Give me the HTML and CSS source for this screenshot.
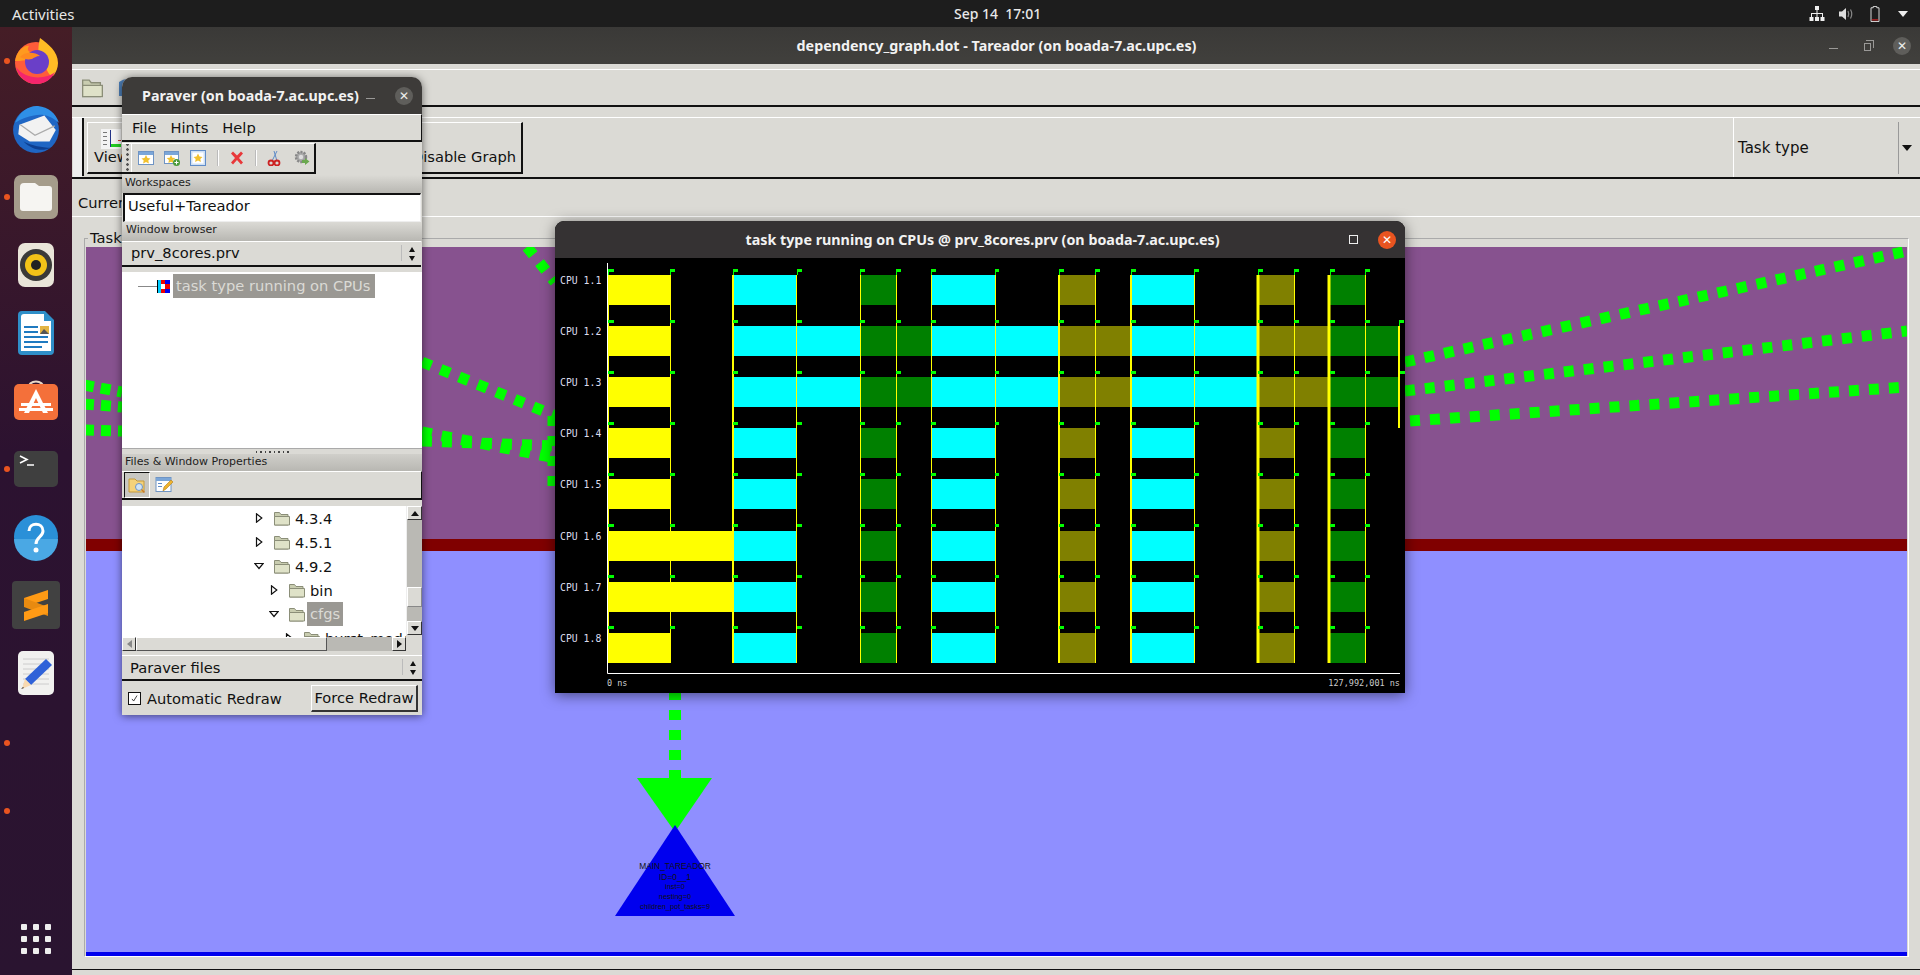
FILE: index.html
```html
<!DOCTYPE html>
<html lang="en">
<head>
<meta charset="utf-8">
<title>Tareador and Paraver</title>
<link rel="stylesheet" href="styles.css">
</head>
<body>
<svg class="defs" aria-hidden="true">
  <symbol id="folder" viewBox="0 0 16 15">
    <path d="M.5 14V1.500h5l1.500 2h7V14z" fill="#c9cdb0" stroke="#8b8e78"/>
    <path d="M.5 14V5.500h15V14z" fill="#dfe2c8" stroke="#8b8e78"/>
  </symbol>
  <symbol id="tri-right" viewBox="0 0 8 10"><path d="M1.500.8v8.400L6.800 5z" fill="#fff" stroke="#111" stroke-width="1.200"/></symbol>
  <symbol id="tri-down" viewBox="0 0 10 8"><path d="M.8 1.500h8.400L5 6.500z" fill="#fff" stroke="#111" stroke-width="1.200"/></symbol>
  <g id="flags">
    <path d="M608 0h6v3h-6zM670 0h5v3h-5zM733 0h5v3h-5zM797 0h5v3h-5zM860 0h5v3h-5zM896 0h5v3h-5zM931 0h5v3h-5zM995 0h4v3h-4zM1059 0h5v3h-5zM1095 0h5v3h-5zM1131 0h5v3h-5zM1194 0h5v3h-5zM1258 0h5v3h-5zM1294 0h5v3h-5zM1330 0h5v3h-5zM1365 0h5v3h-5z" fill="#0f0"/>
  </g>
  <g id="row-short">
    <rect x="608" width="63" height="30" fill="#ff0"/>
    <rect x="733" width="64" height="30" fill="#0ff"/>
    <rect x="860" width="37" height="30" fill="#008000"/>
    <rect x="931" width="64" height="30" fill="#0ff"/>
    <rect x="1059" width="36" height="30" fill="#808000"/>
    <rect x="1131" width="64" height="30" fill="#0ff"/>
    <rect x="1258" width="36" height="30" fill="#808000"/>
    <rect x="1329" width="36" height="30" fill="#008000"/>
  </g>
  <g id="row-long">
    <rect x="608" width="63" height="30" fill="#ff0"/>
    <rect x="733" width="127" height="30" fill="#0ff"/>
    <rect x="860" width="71" height="30" fill="#008000"/>
    <rect x="931" width="128" height="30" fill="#0ff"/>
    <rect x="1059" width="72" height="30" fill="#808000"/>
    <rect x="1131" width="127" height="30" fill="#0ff"/>
    <rect x="1258" width="71" height="30" fill="#808000"/>
    <rect x="1329" width="70" height="30" fill="#008000"/>
  </g>
</svg>

<header class="topbar">
  <span class="activities">Activities</span>
  <span class="clock">Sep 14&nbsp;&nbsp;17:01</span>
  <div class="tray">
    <svg class="tray-icon" viewBox="0 0 16 16"><path d="M6 0h4v4H8.500v3H14v4h1.500v4h-4v-4H13V8H8.500v3H10v4H6v-4h1.500V8H3v3h1.500v4h-4v-4H2V7h5.500V4H6z" fill="#eee"/></svg>
    <svg class="tray-icon" viewBox="0 0 16 16"><path d="M1 5.500h3L8 2v12l-4-3.500H1z" fill="#ddd"/><path d="M10 5q1.500 3 0 6M12.500 3.500q2.500 4.500 0 9" fill="none" stroke="#888" stroke-width="1.200"/></svg>
    <svg class="tray-icon" viewBox="0 0 16 18"><path d="M6 .5h4v1.500h2.500v15.500h-9V2H6z" fill="#1d1d1d" stroke="#eee"/><path d="M4.500 15h7v1.200h-7z" fill="#d22"/></svg>
    <span class="tray-arrow"></span>
  </div>
</header>

<div class="desktop">
  <nav class="dock">
    <div class="dock-item"><span class="dot"></span>
      <svg class="dock-icon" viewBox="0 0 48 48">
        <circle cx="24" cy="26" r="21" fill="#ff5c3a"/>
        <path d="M3 24C5 12 14 8 17 9c-2 3-1 5 1 6 6-1 10 3 10 6L8 24z" fill="#ff9a1f"/>
        <path d="M28 1c8 6 18 13 18 25 0 5-2 9-4 12-6 5-9-14-14-20-3-3-1-12 0-17z" fill="#ffbc25"/>
        <path d="M4 30c2 10 11 17 20 17s16-5 19-12c-8 7-29 9-39-5z" fill="#f4256d"/>
        <circle cx="25" cy="25" r="12" fill="#6a3fc8"/>
        <path d="M8 20c4-5 14-6 20-1-4 0-6 2-8 3-4 1-8 0-12-2z" fill="#ff8a1f"/>
      </svg>
    </div>
    <div class="dock-item">
      <svg class="dock-icon dock-wide" viewBox="0 0 48 48">
        <circle cx="24" cy="25" r="22" fill="#1f66c4"/>
        <path d="M4 18C8 7 18 1 26 2c10 1 17 7 20 16-8-7-16-9-24-7-6 1-12 3-18 7z" fill="#2f8fe6"/>
        <path d="M8 20l24-9 11 14-6 11H18L7 29z" fill="#f2f2f2"/>
        <path d="M9 20l14 10 19-9" fill="none" stroke="#aaa" stroke-width="1.200"/>
        <path d="M12 36c8 8 18 10 26 6-8 0-18-2-26-6z" fill="#0d3f91"/>
      </svg>
    </div>
    <div class="dock-item"><span class="dot"></span>
      <svg class="dock-icon" viewBox="0 0 48 48">
        <rect x="2" y="2" width="44" height="44" rx="7" fill="#a59c8b"/>
        <path d="M8 14a4 4 0 0 1 4-4h11l4 3h10a3 3 0 0 1 3 3v19a3 3 0 0 1-3 3H11a3 3 0 0 1-3-3z" fill="#f6f5f2"/>
      </svg>
    </div>
    <div class="dock-item">
      <svg class="dock-icon" viewBox="0 0 48 48">
        <rect x="6" y="2" width="36" height="44" rx="7" fill="#e9e5d9"/>
        <circle cx="24" cy="24" r="16" fill="#3a3a38"/>
        <circle cx="24" cy="24" r="11" fill="#f2c318"/>
        <circle cx="24" cy="24" r="5" fill="#222"/>
      </svg>
    </div>
    <div class="dock-item">
      <svg class="dock-icon" viewBox="0 0 48 48">
        <path d="M6 6a4 4 0 0 1 4-4h23l9 9v31a4 4 0 0 1-4 4H10a4 4 0 0 1-4-4z" fill="#2f8fc9"/>
        <path d="M9 8a3 3 0 0 1 3-3h20v7h7v30H9z" fill="#fff"/>
        <path d="M12 17h14v2H12zM12 22h14v2H12zM12 27h24v2H12zM12 32h24v2H12zM12 37h18v2H12z" fill="#1f7ac0"/>
        <path d="M28 17h9v8h-9z" fill="#e3b544"/><path d="M28 25l4-5 5 5z" fill="#555"/>
      </svg>
    </div>
    <div class="dock-item">
      <svg class="dock-icon" viewBox="0 0 48 48">
        <path d="M16 12c0-10 16-10 16 0" fill="none" stroke="#e8d8c8" stroke-width="2"/>
        <rect x="2" y="7" width="44" height="36" rx="5" fill="#f4703a"/>
        <path d="M24 12l12 24h-5l-7-15-7 15h-5z" fill="#fff"/>
        <path d="M9 26h30v3H9zM7 31h34v3H7z" fill="#fff"/>
      </svg>
    </div>
    <div class="dock-item"><span class="dot"></span>
      <svg class="dock-icon" viewBox="0 0 48 48">
        <rect x="2" y="6" width="44" height="36" rx="5" fill="#3f3f3f"/>
        <path d="M8 11l7 3.500-7 3.500M15 20h7" fill="none" stroke="#fff" stroke-width="1.600"/>
      </svg>
    </div>
    <div class="dock-item">
      <svg class="dock-icon" viewBox="0 0 48 48">
        <circle cx="24" cy="24" r="22" fill="#2a90d8"/>
        <path d="M2 26h44a22 22 0 0 1-44 0z" fill="#4aa8e4"/>
        <path d="M17 18c0-9 14-9 14 0 0 6-7 6-7 13" fill="none" stroke="#fff" stroke-width="3"/>
        <circle cx="24" cy="37" r="2.500" fill="#fff"/>
      </svg>
    </div>
    <div class="dock-item">
      <svg class="dock-icon" viewBox="0 0 48 48">
        <rect width="48" height="48" rx="4" x="0" y="0" fill="#414141"/>
        <path d="M12 17L36 9v9L12 26z" fill="#ff9a15"/>
        <path d="M12 17l24 9v9L12 26z" fill="#e88a10"/>
        <path d="M12 31l24-8v9l-24 8z" fill="#ff9a15"/>
      </svg>
    </div>
    <div class="dock-item">
      <svg class="dock-icon" viewBox="0 0 48 48">
        <rect x="6" y="2" width="36" height="44" rx="5" fill="#f1f1ef"/>
        <path d="M11 10h26M11 15h26M11 20h26M11 25h26M11 30h26M11 35h26" stroke="#ccc" stroke-width="1"/>
        <path d="M34 10l6 6-21 20-6-6z" fill="#2f62d8"/>
        <path d="M13 30l6 6-9 4z" fill="#f8d9b0"/>
        <path d="M11 38l-2 2 3-1z" fill="#333"/>
      </svg>
    </div>
    <span class="dot dot-a"></span>
    <span class="dot dot-b"></span>
    <div class="app-grid">
      <i></i><i></i><i></i><i></i><i></i><i></i><i></i><i></i><i></i>
    </div>
  </nav>

  <main class="main-window">
    <div class="wm-title main-title">
      <span class="wm-text">dependency_graph.dot - Tareador (on boada-7.ac.upc.es)</span>
      <div class="wm-buttons">
        <span class="wm-min"></span>
        <span class="wm-max"></span>
        <span class="wm-close">✕</span>
      </div>
    </div>
    <div class="toolbar-one">
      <svg class="tb-folder" viewBox="0 0 16 15"><use href="#folder"/></svg>
      <svg class="tb-save" viewBox="0 0 20 20"><path d="M2 4q8-6 16 0v14H2z" fill="#4d7fb8"/></svg>
    </div>
    <div class="toolbar-two">
      <div class="grip-big"></div>
      <div class="group">
        <div class="view-btn">
          <svg class="view-icon" viewBox="0 0 20 20"><rect width="20" height="20" fill="#f3f3f3"/><path d="M2 3h4v1H2zM2 7h4v1H2zM2 11h4v1H2zM2 15h4v1H2z" fill="#777"/><path d="M9 1h1v17H9z" fill="#238"/><path d="M10 15h10v3H10z" fill="#2c2"/><path d="M17 11h3v1h-3z" fill="#c33"/></svg>
          <span>View</span>
        </div>
        <span class="disable">Disable Graph</span>
      </div>
      <div class="task-combo">
        <span class="task-text">Task type</span>
        <span class="task-sep"></span>
        <span class="task-arrow"></span>
      </div>
    </div>
    <div class="current-row"><span>Current</span></div>
    <div class="notebook">
      <div class="frame">
        <span class="frame-legend">Task</span>
        <svg class="graph" viewBox="86 247 1821 709">
          <rect x="86" y="247" width="1821" height="292" fill="#87528f"/>
          <rect x="86" y="539" width="1821" height="12" fill="#800000"/>
          <rect x="86" y="551" width="1821" height="401" fill="#8f8fff"/>
          <rect x="86" y="952" width="1821" height="4" fill="#0000ee"/>
          <g class="edges">
            <path d="M527 247L555 282"/>
            <path d="M422 362L556 416"/>
            <path d="M422 432L556 458"/>
            <path d="M422 441L556 446"/>
            <path class="edge-s" d="M84 385L122 392"/>
            <path class="edge-s" d="M84 404L122 407"/>
            <path class="edge-s" d="M84 430L122 431"/>
            <path d="M553 416V490"/>
            <path d="M1405 362L1907 251"/>
            <path d="M1405 391L1907 331"/>
            <path d="M1410 421L1907 387"/>
            <path class="edge-v" d="M675 690V780"/>
          </g>
          <path d="M637 778H712L675 832z" fill="#0f0"/>
          <path d="M675 825L735 916H615z" fill="#0000ee"/>
          <g class="node-text">
            <text x="675" y="869" class="n1">MAIN_TAREADOR</text>
            <text x="675" y="880" class="n1">ID=0__1</text>
            <text x="675" y="889" class="n2">inst=0</text>
            <text x="675" y="899" class="n2">nesting=0</text>
            <text x="675" y="909" class="n2">children_pot_tasks=9</text>
          </g>
        </svg>
      </div>
      <div class="bottom-strip"></div>
    </div>
  </main>

  <section class="paraver">
    <div class="wm-title paraver-title">
      <span class="pv-title-text">Paraver (on boada-7.ac.upc.es)</span>
      <span class="wm-min pv-min"></span>
      <span class="wm-close pv-close">✕</span>
    </div>
    <div class="pv-menu"><span>File</span><span>Hints</span><span>Help</span></div>
    <div class="pv-tool-row">
      <div class="pv-toolbar">
        <span class="pv-grip"></span>
        <svg class="ti t1" viewBox="0 0 16 16"><rect x=".5" y="1.500" width="15" height="13" fill="#fff" stroke="#6f94c4"/><path d="M1 2h14v3H1z" fill="#7ba6d8"/><path d="M8 5l1.500 3 3 .4-2.200 2 .6 3L8 12l-2.900 1.400.6-3-2.200-2 3-.4z" fill="#f2c12e"/></svg>
        <svg class="ti t2" viewBox="0 0 16 16"><rect x=".5" y="1.500" width="14" height="12" fill="#fff" stroke="#6f94c4"/><path d="M1 2h13v3H1z" fill="#7ba6d8"/><path d="M7 5l1.300 2.700 3 .4-2.200 2 .5 3L7 11.700l-2.600 1.400.5-3-2.200-2 3-.4z" fill="#f2c12e"/><circle cx="12.500" cy="12.500" r="3.500" fill="#4a9a3a"/><path d="M10.500 12.500h4M12.500 10.500v4" stroke="#fff"/></svg>
        <svg class="ti t3" viewBox="0 0 16 16"><rect x=".5" y=".5" width="15" height="15" fill="#cfe0f4" stroke="#5f8cc8"/><rect x="2.500" y="2.500" width="11" height="11" fill="#fff"/><path d="M8 3.500l1.500 3 3 .4-2.200 2 .6 3L8 10.500l-2.900 1.400.6-3-2.200-2 3-.4z" fill="#f2c12e"/></svg>
        <span class="t-sep"></span>
        <svg class="ti t4" viewBox="0 0 16 16"><path d="M2 3.500L4 1.500 8 5.500l4-4 2 2L10 8l4 4.500-2 2-4-4.500-4 4.500-2-2L6 8z" fill="#e8383a"/></svg>
        <span class="t-sep"></span>
        <svg class="ti t5" viewBox="0 0 16 16"><path d="M5 11L10 1M10 11L7 1" stroke="#5f8cc8" fill="none"/><circle cx="4" cy="13" r="2.500" fill="none" stroke="#c22" stroke-width="1.800"/><circle cx="10" cy="13" r="2.500" fill="none" stroke="#c22" stroke-width="1.800"/></svg>
        <svg class="ti t6" viewBox="0 0 16 16"><circle cx="7" cy="7" r="5" fill="#aaa" stroke="#888" stroke-width="2.500" stroke-dasharray="2 1.200"/><circle cx="7" cy="7" r="2.200" fill="#ddd"/><path d="M8 10h3V8l4.500 3.500L11 15v-2H8z" fill="#6aa84f"/></svg>
      </div>
    </div>
    <div class="pv-label">Workspaces</div>
    <div class="pv-entry">Useful+Tareador</div>
    <div class="pv-label pv-label-b">Window browser</div>
    <div class="pv-combo combo-top">
      <span>prv_8cores.prv</span>
      <span class="combo-sep"></span>
      <span class="updown"></span>
    </div>
    <div class="pv-browser">
      <div class="browser-row">
        <span class="tree-line"></span>
        <svg class="window-icon" viewBox="0 0 13 13"><path d="M0 0h1v13H0z" fill="#000"/><path d="M1 0h3v13H1z" fill="#0cf"/><path d="M4 0h4v4H4zM4 9h4v4H4z" fill="#e00"/><path d="M8 0h5v4H8zM8 9h5v4H8z" fill="#00e"/><path d="M4 4h4v5H4z" fill="#fff"/><path d="M8 4h5v5H8z" fill="#e00"/></svg>
        <span class="selected sel-big">task type running on CPUs</span>
      </div>
    </div>
    <div class="pv-sash"><i></i><i></i><i></i><i></i><i></i><i></i><i></i><i></i></div>
    <div class="pv-label pv-label-c">Files &amp; Window Properties</div>
    <div class="pv-tabs">
      <span class="tab-on">
        <svg class="tab-icon" viewBox="0 0 18 18"><path d="M1 3h6l2 2h7v11H1z" fill="#f4d27a" stroke="#c49a3c"/><circle cx="11" cy="11" r="3.500" fill="#cfe4f6" stroke="#6f94c4"/><path d="M13.500 13.500l3 3" stroke="#c97b2a" stroke-width="1.500"/></svg>
      </span>
      <svg class="tab-icon tab-second" viewBox="0 0 18 18"><rect x="1" y="1.500" width="15" height="14" fill="#fff" stroke="#6f94c4"/><path d="M1 2h15v3H1z" fill="#7ba6d8"/><path d="M3 7h4v1H3zM3 10h4v1H3z" fill="#5f8cc8"/><path d="M8 15l1-4 7-7 2 2-7 7z" fill="#f0b42e" stroke="#b07d1c" stroke-width=".6"/></svg>
    </div>
    <div class="pv-files">
      <div class="files-main">
        <div class="file-tree">
          <div class="file-row d0"><svg class="tw-r" viewBox="0 0 8 10"><use href="#tri-right"/></svg><svg class="fold" viewBox="0 0 16 15"><use href="#folder"/></svg><span>4.3.4</span></div>
          <div class="file-row d0"><svg class="tw-r" viewBox="0 0 8 10"><use href="#tri-right"/></svg><svg class="fold" viewBox="0 0 16 15"><use href="#folder"/></svg><span>4.5.1</span></div>
          <div class="file-row d0"><svg class="tw-d" viewBox="0 0 10 8"><use href="#tri-down"/></svg><svg class="fold" viewBox="0 0 16 15"><use href="#folder"/></svg><span>4.9.2</span></div>
          <div class="file-row d1"><svg class="tw-r" viewBox="0 0 8 10"><use href="#tri-right"/></svg><svg class="fold" viewBox="0 0 16 15"><use href="#folder"/></svg><span>bin</span></div>
          <div class="file-row d1"><svg class="tw-d" viewBox="0 0 10 8"><use href="#tri-down"/></svg><svg class="fold" viewBox="0 0 16 15"><use href="#folder"/></svg><span class="selected">cfgs</span></div>
          <div class="file-row d2"><svg class="tw-r" viewBox="0 0 8 10"><use href="#tri-right"/></svg><svg class="fold" viewBox="0 0 16 15"><use href="#folder"/></svg><span>burst_mode</span></div>
        </div>
        <div class="vscroll">
          <span class="sb-btn"><i class="arr-up"></i></span>
          <span class="v-trough"><span class="v-thumb"></span></span>
          <span class="sb-btn"><i class="arr-down"></i></span>
        </div>
      </div>
      <div class="hscroll">
        <span class="sb-btn h-btn"><i class="arr-left"></i></span>
        <span class="h-thumb"></span>
        <span class="h-trough"></span>
        <span class="sb-btn h-btn"><i class="arr-right"></i></span>
      </div>
    </div>
    <div class="pv-combo combo-bottom">
      <span>Paraver files</span>
      <span class="combo-sep"></span>
      <span class="updown"></span>
    </div>
    <div class="pv-bottom">
      <span class="check">
        <svg viewBox="0 0 13 13"><path d="M3.500 7l2 2.500L9.500 3" fill="none" stroke="#222"/></svg>
      </span>
      <span class="auto">Automatic Redraw</span>
      <span class="force">Force Redraw</span>
    </div>
  </section>

  <section class="chart-window">
    <div class="wm-title chart-title">
      <span class="wm-text">task type running on CPUs @ prv_8cores.prv (on boada-7.ac.upc.es)</span>
      <span class="chart-max"></span>
      <span class="wm-close chart-close">✕</span>
    </div>
    <svg class="chart" viewBox="555 258 850 435">
      <use href="#row-short" y="275"/>
      <use href="#row-long" y="326"/>
      <use href="#row-long" y="377"/>
      <use href="#row-short" y="428"/>
      <use href="#row-short" y="479"/>
      <use href="#row-short" y="531"/>
      <rect x="671" y="531" width="62" height="30" fill="#ff0"/>
      <use href="#row-short" y="582"/>
      <rect x="671" y="582" width="62" height="30" fill="#ff0"/>
      <use href="#row-short" y="633"/>
      <g class="ticks">
        <path class="w1" d="M608.500 275V663M670.500 275V663M796.500 275V663M860.500 275V663M896.500 275V663M931.500 275V663M995.500 275V663M1095.500 275V663M1194.500 275V663M1294.500 275V663M1365.500 275V663"/>
        <path class="w2" d="M733 275V663M1059 275V663M1131 275V663"/>
        <path class="w3" d="M1258 275V663M1329 275V663"/>
        <path class="w2" d="M1399 326V428"/>
      </g>
      <use href="#flags" y="269"/>
      <use href="#flags" y="320"/>
      <use href="#flags" y="371"/>
      <use href="#flags" y="422"/>
      <use href="#flags" y="473"/>
      <use href="#flags" y="524"/>
      <use href="#flags" y="575"/>
      <use href="#flags" y="626"/>
      <path d="M1399 320h5v3h-5zM1400 371h5v3h-5z" fill="#0f0"/>
      <path class="poles" d="M608.500 269V275M670.500 269V275M733.500 269V275M797.500 269V275M860.500 269V275M896.500 269V275M931.500 269V275M995.500 269V275M1059.500 269V275M1095.500 269V275M1131.500 269V275M1194.500 269V275M1258.500 269V275M1294.500 269V275M1330.500 269V275M1365.500 269V275M1399.500 320V326"/>
      <path class="axis" d="M607.500 263V673.500H1400"/>
      <g class="cpu">
        <text x="560" y="284">CPU 1.1</text>
        <text x="560" y="335">CPU 1.2</text>
        <text x="560" y="386">CPU 1.3</text>
        <text x="560" y="437">CPU 1.4</text>
        <text x="560" y="488">CPU 1.5</text>
        <text x="560" y="540">CPU 1.6</text>
        <text x="560" y="591">CPU 1.7</text>
        <text x="560" y="642">CPU 1.8</text>
      </g>
      <text class="time" x="607" y="686">0 ns</text>
      <text class="time time-end" x="1400" y="686">127,992,001 ns</text>
    </svg>
  </section>
</div>
</body>
</html>
```
FILE: styles.css
```css
* { box-sizing: border-box; }
html, body { margin: 0; padding: 0; height: 100%; overflow: hidden; }
body { font-family: "DejaVu Sans", sans-serif; font-size: 14.67px; color: #111; background: #2c1233; }
.defs { position: absolute; width: 0; height: 0; }

/* top bar */
.topbar { height: 27px; background: #1d1d1d; color: #e8e8e8; display: flex; align-items: center; position: relative; font-family: "Noto Sans", sans-serif; font-size: 14px; }
.activities { margin-left: 12px; font-size: 15px; }
.clock { position: absolute; left: 954px; font-weight: 500; }
.tray { margin-left: auto; display: flex; align-items: center; gap: 13px; padding-right: 12px; }
.tray-icon { width: 16px; height: 16px; display: block; }
.tray-arrow { width: 0; height: 0; border: 5px solid transparent; border-top: 6px solid #eee; border-bottom: 0; margin-left: 2px; }

/* desktop */
.desktop { position: relative; display: flex; height: 948px; }
.dock { width: 72px; flex: none; background: linear-gradient(#451d26, #2c1230 45%, #2a1430); display: flex; flex-direction: column; align-items: center; position: relative; }
.dock-item { height: 68px; width: 72px; display: flex; align-items: center; justify-content: center; position: relative; flex: none; }
.dock-icon { width: 48px; height: 48px; display: block; }
.dock-wide { width: 50px; height: 50px; }
.dot { position: absolute; left: 4px; width: 6px; height: 6px; border-radius: 50%; background: #e95420; top: 31px; }
.dot-a { top: 713px; left: 4px; }
.dot-b { top: 781px; left: 4px; }
.app-grid { margin-top: auto; margin-bottom: 21px; display: grid; grid-template-columns: repeat(3, 6px); gap: 6px; }
.app-grid i { width: 6px; height: 6px; border-radius: 1px; background: #eee; display: block; }

/* title bars */
.wm-title { display: flex; align-items: center; color: #f2f2f2; font-family: "Noto Sans", sans-serif; font-weight: 700; font-size: 14.3px; position: relative; }
.wm-text { flex: 1; text-align: center; }
.wm-close { width: 18px; height: 18px; border-radius: 50%; background: #5f5e5b; color: #eee; font-size: 12px; line-height: 18px; text-align: center; font-weight: 400; font-family: "DejaVu Sans", sans-serif; flex: none; }
.wm-min { width: 9px; height: 1px; background: #9a9997; flex: none; }
.wm-max { width: 7px; height: 8px; border: 1px solid #9a9997; flex: none; position: relative; margin: 2px 0 0 0; }
.wm-max::after { content: ""; position: absolute; left: 1px; top: -4px; width: 7px; height: 7px; border-top: 1px solid #9a9997; border-right: 1px solid #9a9997; }

/* main window */
.main-window { flex: 1; background: #dbdad5; display: flex; flex-direction: column; min-width: 0; }
.main-title { height: 37px; background: linear-gradient(#3a3937, #41403d); }
.main-title .wm-text { padding-left: 92px; }
.wm-buttons { display: flex; align-items: center; padding-right: 9px; }
.wm-buttons .wm-min { margin: 5px 26px 0 0; }
.wm-buttons .wm-max { margin-right: 22px; }
.toolbar-one { height: 38px; margin-top: 5px; border-top: 1px solid #fff; border-bottom: 2px solid #111; display: flex; align-items: center; gap: 14px; padding: 0 0 0 10px; }
.tb-folder { width: 21px; height: 20px; }
.tb-save { width: 20px; height: 20px; }
.toolbar-two { height: 62px; margin-top: 10px; border-top: 1px solid #fff; border-bottom: 2px solid #111; display: flex; align-items: stretch; }
.grip-big { width: 9px; margin: 0 0 0 1px; background: radial-gradient(#9a9a95 35%, #eee 40%) 0 0 / 2px 2px; }
.group { width: 436px; margin-left: 5px; margin-top: 4px; margin-bottom: 3px; border-left: 1px solid #fff; border-top: 1px solid #fff; border-right: 2px solid #111; border-bottom: 2px solid #111; display: flex; justify-content: space-between; padding: 0 5px 0 6px; align-items: flex-end; position: relative; }
.group::before { content: ""; position: absolute; left: -6px; top: -5px; bottom: -4px; width: 2px; background: #111; }
.view-btn { display: flex; flex-direction: column; align-items: center; gap: 0; padding-bottom: 7px; }
.view-icon { width: 20px; height: 20px; margin-bottom: -1px; }
.disable { padding-bottom: 7px; }
.task-combo { margin-left: auto; width: 187px; border-left: 1px solid #fff; display: flex; align-items: center; padding-left: 4px; position: relative; font-size: 15px; }
.task-sep { position: absolute; left: 164px; top: 4px; bottom: 3px; width: 1px; background: #999; }
.task-arrow { position: absolute; left: 168px; top: 27px; width: 0; height: 0; border: 5px solid transparent; border-top: 6px solid #111; border-bottom: 0; }
.current-row { height: 38px; padding: 15px 0 0 6px; font-size: 14.67px; border-bottom: 1px solid #fff; }
.notebook { flex: 1; display: flex; flex-direction: column; padding-top: 21px; min-height: 0; }
.frame { position: relative; margin: 0 11px 0 12px; height: 719px; border: 1px solid #fff; border-top-color: #aaa; border-left-color: #aaa; padding: 8px 1px 0 1px; }
.frame-legend { position: absolute; left: 3px; top: -10px; background: #dbdad5; padding: 0 2px; }
.graph { display: block; width: 1821px; height: 709px; }
.edges path { fill: none; stroke: #0f0; stroke-width: 11px; stroke-dasharray: 10 10; }
.edges .edge-v { stroke-width: 12px; }
.edges .edge-s { stroke-dasharray: 10 7; }
.node-text text { text-anchor: middle; font-family: "Liberation Sans", sans-serif; fill: #111; }
.n1 { font-size: 8.400px; }
.n2 { font-size: 7.400px; }
.bottom-strip { flex: 1; border-bottom: 1px solid #111; margin-bottom: 5px; margin-top: 1px; }

/* paraver */
.paraver { position: absolute; left: 122px; top: 50px; width: 300px; height: 638px; background: #dbdad5; border-radius: 10px 10px 0 0; box-shadow: 0 1px 8px rgba(0,0,0,.55); display: flex; flex-direction: column; overflow: hidden; }
.paraver-title { height: 37px; background: #3d3b39; flex: none; padding-left: 20px; }
.pv-title-text { width: 214px; white-space: nowrap; }
.pv-min { margin-left: 10px; margin-top: 5px; }
.pv-close { margin-left: auto; margin-right: 9px; width: 18px; }
.pv-menu { height: 28px; flex: none; border-top: 1px solid #fff; border-bottom: 2px solid #111; border-right: 1px solid #111; display: flex; gap: 14px; padding-left: 10px; align-items: center; }
.pv-tool-row { height: 33px; flex: none; padding-top: 1px; }
.pv-toolbar { width: 194px; height: 31px; border-top: 1px solid #fff; border-bottom: 2px solid #111; border-right: 2px solid #111; display: flex; align-items: center; position: relative; }
.pv-grip { width: 10px; height: 100%; background: radial-gradient(circle, #555 45%, transparent 50%) 4px 3px / 3px 5px repeat-y; border-right: 1px solid #fff; flex: none; }
.ti { width: 16px; height: 16px; flex: none; }
.t1 { margin-left: 6px; }
.t2 { margin-left: 10px; }
.t3 { margin-left: 10px; }
.t-sep { width: 2px; height: 16px; background: #bbb; border-right: 1px solid #fff; margin-left: 11px; flex: none; }
.t4 { margin-left: 10px; }
.t4 + .t-sep { margin-left: 10px; }
.t5 { margin-left: 10px; }
.t6 { margin-left: 11px; }
.pv-label { height: 18px; flex: none; font-size: 11px; padding: 1px 0 0 3px; background: linear-gradient(#dbdad5, #b8b7b2); color: #222; }
.pv-label-b { height: 19px; padding-left: 4px; }
.pv-label-c { height: 17px; background: linear-gradient(#d0cfca, #b8b7b2); }
.pv-entry { height: 29px; flex: none; margin: 0 1px; background: #fff; border: 2px solid #111; border-right: 1px solid #eee; border-bottom: 1px solid #eee; padding: 2px 0 0 3px; }
.pv-combo { flex: none; display: flex; align-items: center; position: relative; border-top: 1px solid #fff; border-bottom: 2px solid #111; }
.combo-top { height: 26px; padding: 0 0 3px 9px; margin-right: 1px; }
.combo-bottom { height: 26px; padding: 0 0 1px 8px; margin-top: 4px; }
.combo-sep { position: absolute; right: 19px; top: 3px; bottom: 4px; width: 1px; background: #bbb; }
.updown { position: absolute; right: 5px; top: 6px; width: 7px; height: 12px; }
.updown::before, .updown::after { content: ""; position: absolute; left: 0; border: 3.500px solid transparent; }
.updown::before { top: -1px; border-top: 0; border-bottom: 5px solid #111; }
.updown::after { bottom: -1px; border-bottom: 0; border-top: 5px solid #111; }
.pv-browser { height: 176px; margin-top: 5px; flex: none; background: #fff; padding-top: 2px; }
.browser-row { height: 24px; display: flex; align-items: center; padding-left: 16px; }
.tree-line { width: 19px; height: 1px; background: #888; flex: none; }
.window-icon { width: 13px; height: 13px; flex: none; }
.selected { background: #9a9893; color: #dbdad5; padding: 0 0 0 3px; display: inline-block; height: 24px; line-height: 24px; }
.sel-big { width: 202px; margin-left: 3px; }
.pv-sash { height: 6px; flex: none; display: flex; gap: 3px; justify-content: center; align-items: center; border-top: 1px solid #aaa; }
.pv-sash i { width: 1.500px; height: 2px; background: #444; display: block; }
.pv-tabs { height: 29px; flex: none; border-top: 1px solid #fff; border-bottom: 2px solid #111; border-right: 1px solid #111; display: flex; align-items: center; }
.tab-on { width: 26px; height: 26px; margin-left: 2px; background: #c8c7c2; border: 1px solid #111; border-right-color: #fff; border-bottom-color: #fff; display: flex; align-items: center; justify-content: center; }
.tab-icon { width: 18px; height: 18px; }
.tab-second { margin-left: 5px; }
.pv-files { height: 145px; margin-top: 6px; flex: none; display: flex; flex-direction: column; }
.files-main { height: 131px; display: flex; }
.file-tree { flex: 1; background: #fff; overflow: hidden; min-width: 0; }
.file-row { height: 24px; display: flex; align-items: center; }
.file-row.d0 { padding-left: 133px; }
.file-row.d1 { padding-left: 148px; }
.file-row.d2 { padding-left: 163px; }
.tw-r { width: 8px; height: 10px; margin-right: 11px; flex: none; }
.tw-d { width: 10px; height: 8px; margin-left: -1px; margin-right: 10px; flex: none; }
.fold { width: 16px; height: 15px; margin-right: 5px; flex: none; }
.file-row .selected { margin-left: -3px; padding: 0 3px 0 3px; }
.vscroll { width: 16px; margin-bottom: 2px; background: #bab9b4; display: flex; flex-direction: column; border-left: 1px solid #eee; flex: none; }
.sb-btn { height: 14px; flex: none; background: #dbdad5; border-top: 1px solid #fff; border-left: 1px solid #fff; border-right: 1px solid #333; border-bottom: 1px solid #333; display: flex; align-items: center; justify-content: center; }
.v-trough { flex: 1; display: flex; flex-direction: column; justify-content: flex-end; padding-bottom: 14px; }
.v-thumb { height: 20px; background: #dbdad5; border: 1px solid #fff; border-right-color: #888; border-bottom-color: #888; display: block; }
.arr-up, .arr-down, .arr-left, .arr-right { width: 0; height: 0; border: 4px solid transparent; display: block; }
.arr-up { border-top: 0; border-bottom: 5px solid #111; }
.arr-down { border-bottom: 0; border-top: 5px solid #111; }
.arr-left { border-left: 0; border-right: 5px solid #888; }
.arr-right { border-right: 0; border-left: 5px solid #111; }
.hscroll { height: 14px; width: 284px; display: flex; background: #bab9b4; }
.h-btn { width: 14px; height: 14px; }
.h-thumb { width: 191px; background: #dbdad5; border: 1px solid #fff; border-right-color: #555; border-bottom-color: #555; }
.h-trough { flex: 1; }
.pv-bottom { flex: 1; display: flex; align-items: center; padding-left: 6px; position: relative; }
.check { width: 13px; height: 13px; border: 1px solid #111; background: #fff; display: block; flex: none; }
.check svg { display: block; width: 11px; height: 11px; }
.auto { margin-left: 6px; }
.force { margin-left: auto; margin-right: 4px; width: 107px; height: 27px; border: 1px solid #fff; border-right: 2px solid #333; border-bottom: 2px solid #333; line-height: 24px; text-align: center; }

/* chart window */
.chart-window { position: absolute; left: 555px; top: 194px; width: 850px; height: 472px; background: #000; border-radius: 9px 9px 0 0; box-shadow: 0 2px 14px rgba(0,0,0,.5); overflow: hidden; display: flex; flex-direction: column; }
.chart-title { height: 37px; background: #353233; flex: none; padding: 0 9px 0 0; }
.chart-title .wm-text { padding-left: 61px; }
.chart-max { width: 9px; height: 9px; border: 1px solid #eee; margin-right: 20px; flex: none; }
.chart-close { background: #e95420; color: #fff; }
.chart { display: block; width: 850px; height: 435px; }
.ticks path { fill: none; stroke: #ff0; }
.w1 { stroke-width: 1px; }
.w2 { stroke-width: 2px; }
.w3 { stroke-width: 3px; }
.poles { fill: none; stroke: #0f0; stroke-width: 1px; }
.axis { fill: none; stroke: #fff; stroke-width: 1px; }
.cpu text { font-family: "DejaVu Sans Mono", monospace; font-size: 9.800px; fill: #dde; }
.time { font-family: "DejaVu Sans Mono", monospace; font-size: 8.500px; fill: #ccc; }
.time-end { text-anchor: end; }
```
